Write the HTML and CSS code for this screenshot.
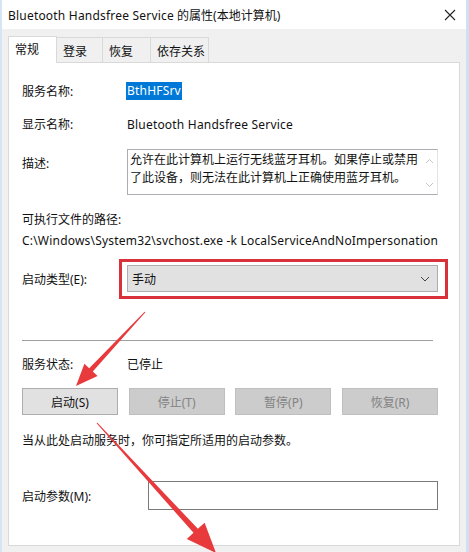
FILE: index.html
```html
<!DOCTYPE html>
<html lang="zh-CN">

<head>
    <meta charset="UTF-8">
    <meta name="viewport" content="width=device-width, initial-scale=1.0">
    <title>Bluetooth Handsfree Service 的属性(本地计算机)</title>
    <link rel="stylesheet" href="styles.css">
</head>

<body>
    <div class="window">
        <div class="titlebar">
            <span class="title"><span class="latin">Bluetooth Handsfree Service</span> 的属性(本地计算机)</span>
            <svg class="close" width="12" height="12" viewBox="0 0 12 12">
                <path d="M1 1 L11 11 M11 1 L1 11" stroke="#222" stroke-width="1.1" fill="none" />
            </svg>
        </div>

        <div class="tabs">
            <div class="tab active t-general">常规</div>
            <div class="tab t-login">登录</div>
            <div class="tab t-recover">恢复</div>
            <div class="tab t-deps">依存关系</div>
        </div>

        <div class="panel">
            <div class="row r-name">
                <span class="label">服务名称:</span>
                <span class="selected">BthHFSrv</span>
            </div>
            <div class="row r-display">
                <span class="label">显示名称:</span>
                <span class="latin">Bluetooth Handsfree Service</span>
            </div>
            <div class="row r-desc">
                <span class="label desc-label">描述:</span>
                <div class="textarea">
                    <p>允许在此计算机上运行无线蓝牙耳机。如果停止或禁用了此设备，则无法在此计算机上正确使用蓝牙耳机。</p>
                    <div class="scroll">
                        <svg width="9" height="6" viewBox="0 0 9 6"><path d="M1 5 L4.5 1.5 L8 5" stroke="#c4c4c4" fill="none" /></svg>
                        <svg width="9" height="6" viewBox="0 0 9 6"><path d="M1 1 L4.5 4.5 L8 1" stroke="#c4c4c4" fill="none" /></svg>
                    </div>
                </div>
            </div>
            <div class="path-label">可执行文件的路径:</div>
            <div class="path latin">C:\Windows\System32\svchost.exe -k LocalServiceAndNoImpersonation</div>
            <div class="row r-start">
                <span class="label">启动类型(E):</span>
                <div class="select">
                    <span>手动</span>
                    <svg width="10" height="6" viewBox="0 0 10 6"><path d="M1 1 L5 5 L9 1" stroke="#444" fill="none" /></svg>
                </div>
            </div>
            <div class="separator"></div>
            <div class="row r-status">
                <span class="label">服务状态:</span>
                <span>已停止</span>
            </div>
            <div class="buttons">
                <button class="btn">启动(S)</button>
                <button class="btn" disabled>停止(T)</button>
                <button class="btn" disabled>暂停(P)</button>
                <button class="btn" disabled>恢复(R)</button>
            </div>
            <div class="hint">当从此处启动服务时，你可指定所适用的启动参数。</div>
            <div class="row r-param">
                <span class="label param-label">启动参数(M):</span>
                <div class="input"></div>
            </div>
        </div>

        <!-- annotation arrows -->
        <svg class="arrows" width="469" height="552" viewBox="0 0 469 552">
            <polygon fill="#e83a3c" points="145.4,312.3 92.8,371.6 97.6,376 76,386 84.4,363.7 89.2,368.2 144.6,311.7" />
            <polygon fill="#e83a3c" points="97.4,422.7 197.9,528.8 204.6,522.7 216,553 186.8,538.9 193.5,532.8 96.6,423.3" />
        </svg>
    </div>
</body>

</html>
```

FILE: styles.css
```css
* {
    margin: 0;
    padding: 0;
    box-sizing: border-box;
}

body {
    background-color: #f0f0f0;
    font-family: "Noto Sans", "Noto Sans CJK SC", sans-serif;
    font-size: 12px;
    color: #111;
}

/* Latin runs are a bit wider in the original UI font */
.latin {
    letter-spacing: 0.2px;
}

.window {
    position: relative;
    width: 469px;
    height: 552px;
    background-color: #f0f0f0;
    border-left: 2px solid #d6e4f5;
    border-right: 3px solid #cfe0f3;
    overflow: hidden;
}

/* Title bar */
.titlebar {
    height: 29px;
    background-color: #fff;
    display: flex;
    align-items: center;
    justify-content: space-between;
    padding: 0 10px 0 6px;
}

.title {
    font-size: 12px;
    color: #111;
}

/* Tabs */
.tabs {
    display: flex;
    margin: 8px 0 0 6px;
    height: 25px;
}

.tab {
    padding: 2px 0 0 6px;
    border: 1px solid #d9d9d9;
    border-bottom: none;
    border-left: none;
    display: flex;
    align-items: center;
    background-color: #f0f0f0;
}

.tab.active {
    background-color: #fff;
    border-left: 1px solid #d9d9d9;
    position: relative;
    top: 1px;
    margin-top: -2px;
    height: 27px;
    padding: 0 0 2px 6px;
}

.t-general { width: 49px; }
.t-login { width: 46px; }
.t-recover { width: 48px; }
.t-deps { width: 58px; }

/* Main panel */
.panel {
    margin-left: 6px;
    width: 452px;
    height: 484px;
    background-color: #fff;
    border: 1px solid #d9d9d9;
    padding: 19px 20px 0 13px;
}

.row {
    display: flex;
    align-items: center;
}

.label {
    width: 105px;
    flex-shrink: 0;
}

.r-name {
    height: 18px;
}

.selected {
    background-color: #0078d7;
    color: #fff;
    padding: 0 1px 1px;
    margin-left: -1px;
    letter-spacing: 0.2px;
}

.r-display {
    height: 18px;
    margin-top: 15px;
}

.r-desc {
    align-items: flex-start;
    margin-top: 16px;
}

.desc-label {
    padding-top: 5px;
}

.textarea {
    width: 311px;
    height: 46px;
    border: 1px solid #abadb3;
    border-right-color: #e3e3e3;
    display: flex;
}

.textarea p {
    flex: 1;
    padding: 1px 1px 1px 2px;
    line-height: 18px;
}

.scroll {
    width: 15px;
    display: flex;
    flex-direction: column;
    justify-content: space-between;
    align-items: center;
    padding: 8px 0 6px;
}

.path-label {
    margin-top: 16px;
    height: 18px;
    line-height: 18px;
}

.path {
    margin-top: 3px;
    height: 18px;
    line-height: 18px;
    white-space: nowrap;
}

.r-start {
    margin-top: 15px;
}

.select {
    position: relative;
    width: 311px;
    height: 27px;
    background-color: #e1e1e1;
    border: 1px solid #adadad;
    display: flex;
    align-items: center;
    justify-content: space-between;
    padding: 0 7px 0 4px;
}

/* red annotation frame */
.select::after {
    content: "";
    position: absolute;
    top: -7px;
    bottom: -8px;
    left: -9px;
    right: -11px;
    border: 3px solid #d8313a;
}

.separator {
    margin-top: 48px;
    width: 411px;
    height: 1px;
    background-color: #a0a0a0;
}

.r-status {
    height: 18px;
    margin-top: 14px;
}

.buttons {
    display: flex;
    justify-content: space-between;
    width: 416px;
    margin-top: 15px;
}

.btn {
    width: 96px;
    height: 27px;
    font: inherit;
    background-color: #e1e1e1;
    border: 1px solid #adadad;
    color: #111;
}

.btn:disabled {
    background-color: #cccccc;
    border-color: #bfbfbf;
    color: #838383;
}

.hint {
    margin-top: 17px;
    height: 18px;
    line-height: 18px;
}

.r-param {
    margin-top: 31px;
}

.param-label {
    width: 126px;
}

.input {
    width: 290px;
    height: 29px;
    border: 1px solid #7a7a7a;
}

.arrows {
    position: absolute;
    top: 0;
    left: -2px;
    pointer-events: none;
}
```
